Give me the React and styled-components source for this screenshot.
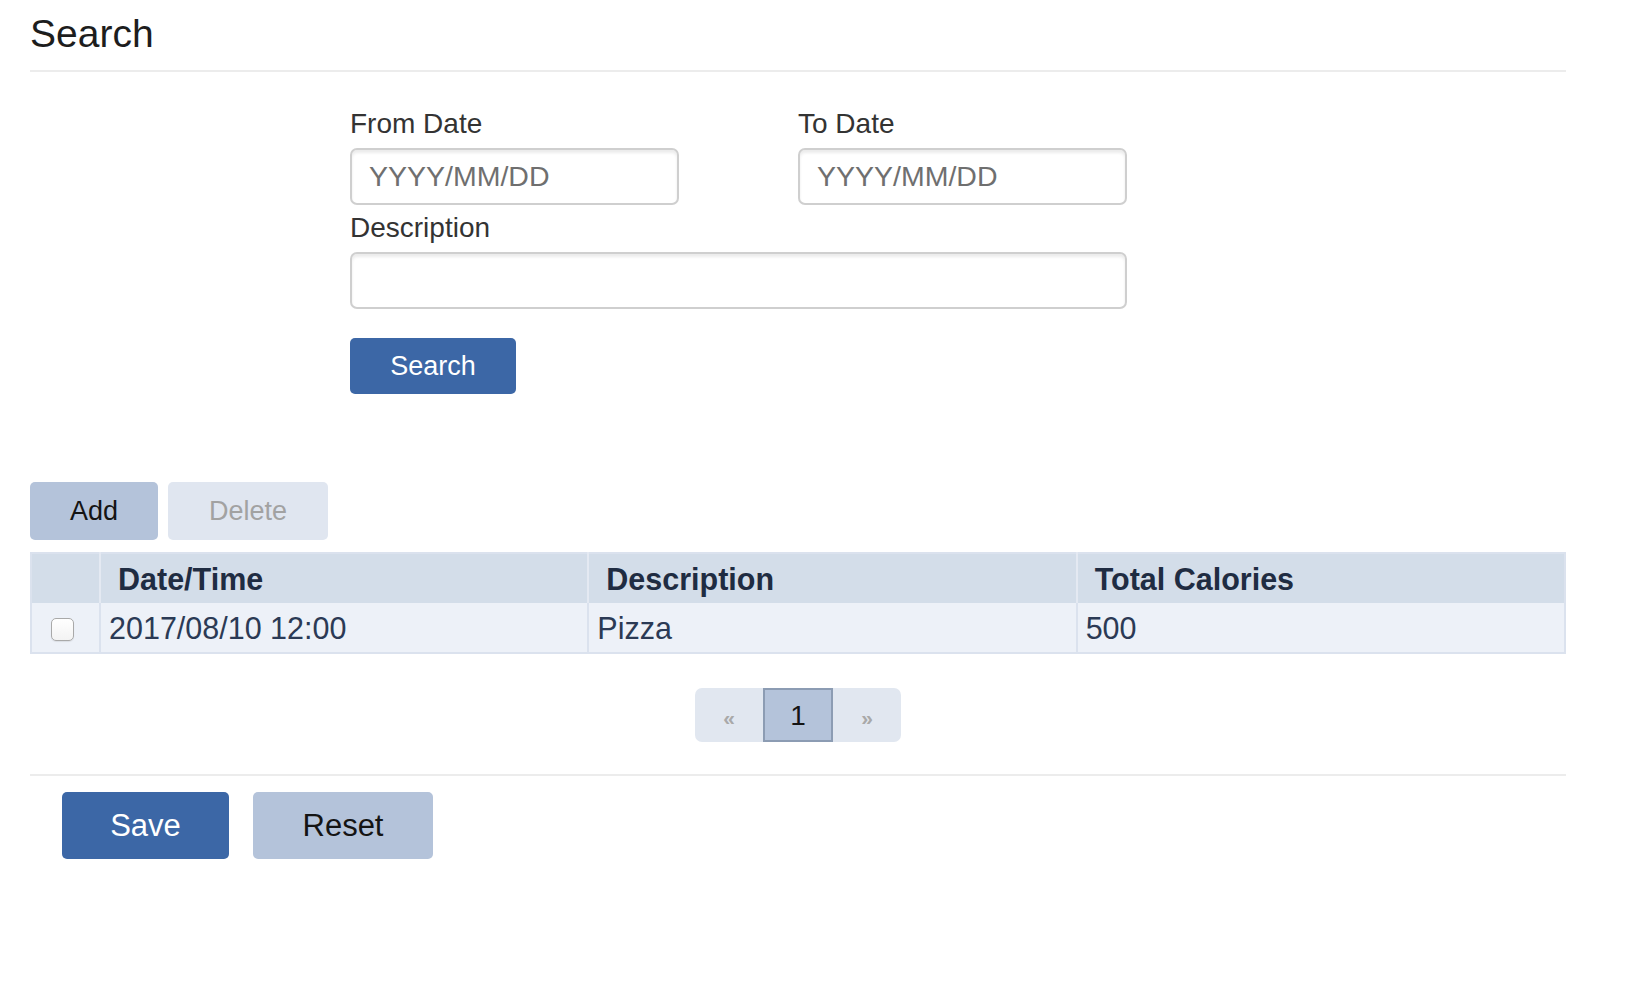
import styled, { createGlobalStyle } from "styled-components";

const GlobalStyle = createGlobalStyle`
    body {
        margin: 0;
        background: #fff;
        font-family: "Liberation Sans", Arial, Helvetica, sans-serif;
        color: #222;
    }
    * {
        box-sizing: border-box;
    }
`;

const Page = styled.div`
    width: 1536px;
    margin-left: 30px;
    padding-top: 11px;
`;

const Title = styled.h1`
    margin: 0;
    font-size: 39px;
    line-height: 45px;
    font-weight: 400;
    color: #1d1d1d;
`;

const Rule = styled.div`
    height: 2px;
    background: #ececec;
    margin-top: ${(props) => props.top || 0}px;
`;

const Form = styled.form`
    width: 777px;
    margin-left: 320px;
    padding-top: 35px;
    display: flex;
    flex-direction: column;
    gap: 6px;
`;

const FieldRow = styled.div`
    display: grid;
    grid-template-columns: 329px 329px;
    column-gap: 119px;
`;

const Field = styled.div`
    display: flex;
    flex-direction: column;
    gap: 7px;
`;

const Label = styled.label`
    font-size: 28px;
    line-height: 34px;
    color: #333;
`;

const TextInput = styled.input`
    height: 57px;
    width: 100%;
    border: 2px solid #cfcfcf;
    border-radius: 7px;
    padding: 0 17px;
    font-family: inherit;
    font-size: 28.5px;
    color: #333;
    box-shadow: inset 0 3px 3px rgba(0, 0, 0, 0.08);
    outline: none;
    &::placeholder {
        color: #6f6f6f;
    }
`;

const Button = styled.button`
    height: ${(props) => props.h || 56}px;
    width: ${(props) => props.w}px;
    border: none;
    border-radius: 5px;
    font-family: inherit;
    font-size: ${(props) => props.fs || 27}px;
    padding: 0;
    cursor: pointer;
    background: ${(props) =>
        props.variant === "primary" ? "#3c67a6" : props.variant === "muted" ? "#e0e6f0" : "#b4c3da"};
    color: ${(props) =>
        props.variant === "primary" ? "#fff" : props.variant === "muted" ? "#a2a2a2" : "#141414"};
`;

const SearchRow = styled.div`
    margin-top: 23px;
`;

const Toolbar = styled.div`
    display: flex;
    gap: 10px;
    margin-top: 88px;
`;

const Table = styled.table`
    margin-top: 12px;
    width: 100%;
    table-layout: fixed;
    border-collapse: collapse;
    border: 2px solid #dbe2ee;
`;

const HeadCell = styled.th`
    height: 50px;
    background: #d3dde9;
    border-left: 2px solid #e4e9f2;
    text-align: left;
    padding: 2px 0 0 17px;
    font-size: 30.5px;
    font-weight: 700;
    color: #1f2c42;
    &:first-child {
        border-left: none;
    }
`;

const Cell = styled.td`
    height: 50px;
    background: #edf1f8;
    border-left: 2px solid #dbe2ee;
    padding: 2px 0 0 ${(props) => (props.check ? 19 : 8)}px;
    font-size: 30.5px;
    color: #2b3a55;
    &:first-child {
        border-left: none;
    }
`;

const Check = styled.input`
    appearance: none;
    display: block;
    width: 23px;
    height: 23px;
    margin: 2px 0 0;
    border: 1px solid #a9a9a9;
    border-radius: 5px;
    background: linear-gradient(#fff, #f3f3f3);
    box-shadow: 0 1px 1px rgba(0, 0, 0, 0.08);
`;

const Pager = styled.div`
    display: flex;
    justify-content: center;
    margin-top: 34px;
`;

const PageGroup = styled.div`
    display: flex;
    border-radius: 7px;
    overflow: hidden;
`;

const PageItem = styled.span`
    width: ${(props) => (props.active ? 70 : 68)}px;
    height: 54px;
    display: flex;
    align-items: center;
    justify-content: center;
    background: ${(props) => (props.active ? "#b4c3da" : "#e1e7f0")};
    border: ${(props) => (props.active ? "2px solid #8c9cb3" : "none")};
    font-size: ${(props) => (props.active ? 28 : 21)}px;
    font-weight: ${(props) => (props.active ? 400 : 700)};
    color: ${(props) => (props.active ? "#141414" : "#a9a9a9")};
    padding-top: ${(props) => (props.active ? 2 : 5)}px;
`;

const Footer = styled.div`
    display: flex;
    gap: 24px;
    margin-top: 16px;
    padding-left: 32px;
`;

export default function App() {
    return (
        <>
            <GlobalStyle />
            <Page>
                <Title>Search</Title>
                <Rule top={14} />
                <Form onSubmit={(e) => e.preventDefault()}>
                    <FieldRow>
                        <Field>
                            <Label>From Date</Label>
                            <TextInput placeholder='YYYY/MM/DD' />
                        </Field>
                        <Field>
                            <Label>To Date</Label>
                            <TextInput placeholder='YYYY/MM/DD' />
                        </Field>
                    </FieldRow>
                    <Field>
                        <Label>Description</Label>
                        <TextInput />
                    </Field>
                    <SearchRow>
                        <Button variant='primary' w={166}>
                            Search
                        </Button>
                    </SearchRow>
                </Form>

                <Toolbar>
                    <Button w={128} h={58}>
                        Add
                    </Button>
                    <Button variant='muted' w={160} h={58}>
                        Delete
                    </Button>
                </Toolbar>

                <Table>
                    <colgroup>
                        <col style={{ width: 69 }} />
                        <col />
                        <col />
                        <col />
                    </colgroup>
                    <thead>
                        <tr>
                            <HeadCell />
                            <HeadCell>Date/Time</HeadCell>
                            <HeadCell>Description</HeadCell>
                            <HeadCell>Total Calories</HeadCell>
                        </tr>
                    </thead>
                    <tbody>
                        <tr>
                            <Cell check>
                                <Check type='checkbox' />
                            </Cell>
                            <Cell>2017/08/10 12:00</Cell>
                            <Cell>Pizza</Cell>
                            <Cell>500</Cell>
                        </tr>
                    </tbody>
                </Table>

                <Pager>
                    <PageGroup>
                        <PageItem>«</PageItem>
                        <PageItem active>1</PageItem>
                        <PageItem>»</PageItem>
                    </PageGroup>
                </Pager>

                <Rule top={32} />
                <Footer>
                    <Button variant='primary' w={167} h={67} fs={31}>
                        Save
                    </Button>
                    <Button w={180} h={67} fs={31}>
                        Reset
                    </Button>
                </Footer>
            </Page>
        </>
    );
}
